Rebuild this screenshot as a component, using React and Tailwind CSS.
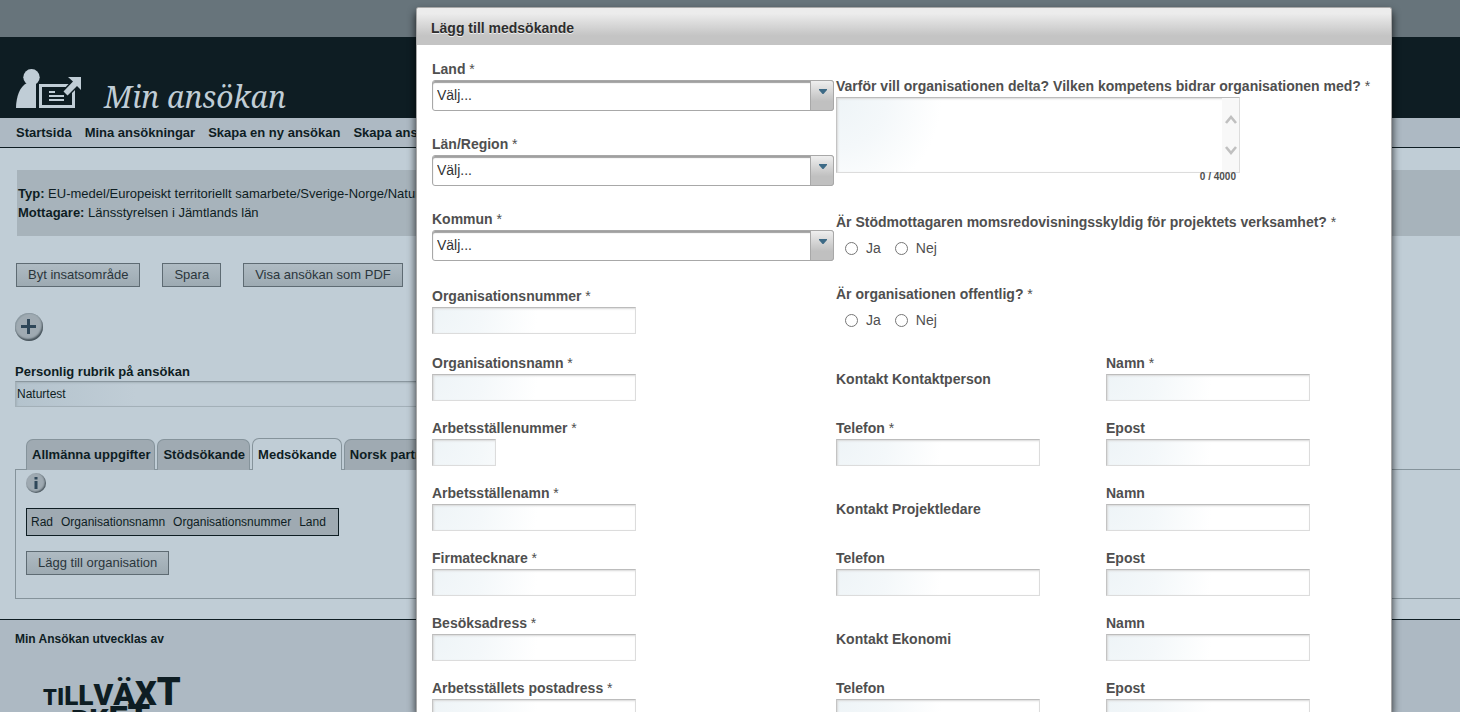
import { useState } from 'react';

const inputBg = 'bg-[radial-gradient(circle_at_0%_0%,#eef4f7_0%,#f4f8fa_50px,#ffffff_105px)]';
const inputBorder = 'border border-[#dcdcdc] border-t-[#bcbcbc] border-l-[#c4c4c4] shadow-[inset_1px_1px_2px_#d8d8d8]';

function Label({ htmlFor, required, children }) {
  return (
    <label htmlFor={htmlFor} className="block h-[17px] leading-[17px] whitespace-nowrap font-bold">
      {children}
      {required && <span className="font-normal"> *</span>}
    </label>
  );
}

function TextField({ id, label, required, small }) {
  return (
    <div className="h-[65px]">
      <Label htmlFor={id} required={required}>{label}</Label>
      <input
        id={id}
        type="text"
        className={`block mt-[2px] h-[27px] px-1 ${small ? 'w-[64px]' : 'w-[204px]'} ${inputBg} ${inputBorder}`}
      />
    </div>
  );
}

function SelectField({ id, label }) {
  return (
    <div className="h-[75px]">
      <Label htmlFor={id} required>{label}</Label>
      <div className="relative mt-[2px]">
        <select
          id={id}
          className="block w-full h-[31px] appearance-none rounded-[3px] border border-[#a8a8a8] bg-white pl-1 text-[#333] shadow-[inset_0_2px_1px_#a0a0a0]"
        >
          <option>Välj...</option>
        </select>
        <span className="pointer-events-none absolute right-0 top-0 h-[31px] w-[24px] rounded-r-[3px] border border-[#a8a8a8] bg-linear-to-b from-[#efefef] to-[#c0c0c0] to-70%">
          <svg viewBox="0 0 8 5" className="absolute left-[8px] top-[8px] h-[5px] w-[8px]">
            <path d="M0 0h8v1L4.500 5h-1L0 1z" fill="#3d6a86" />
          </svg>
        </span>
      </div>
    </div>
  );
}

function RadioField({ name, label }) {
  const [value, setValue] = useState('');
  return (
    <fieldset className="h-[72px]">
      <legend className="h-[17px] leading-[17px] whitespace-nowrap font-bold">
        {label}<span className="font-normal"> *</span>
      </legend>
      <div className="flex items-center gap-[14px] pl-[9px] pt-[8px]">
        {['Ja', 'Nej'].map((option) => (
          <label key={option} className="flex items-center gap-[8px] leading-[18px]">
            <input
              type="radio"
              name={name}
              checked={value === option}
              onChange={() => setValue(option)}
              className="size-[13px]"
            />
            {option}
          </label>
        ))}
      </div>
    </fieldset>
  );
}

function Heading({ children }) {
  return <h3 className="h-[65px] pt-[16px] leading-[17px] font-bold">{children}</h3>;
}

function Dialog() {
  const [text, setText] = useState('');
  return (
    <div
      role="dialog"
      aria-labelledby="dialog-title"
      className="absolute top-[7px] bottom-0 left-[416px] right-[68px] overflow-hidden rounded-t-[3px] border border-b-0 border-[#a8a8a8] bg-white text-[14px] text-[#4f4f4f] shadow-[0_5px_8px_rgba(0,0,0,0.8)]"
    >
      <div className="h-[37px] bg-linear-to-b from-[#ececec] from-15% to-[#c4c4c4] to-75% px-[14px]">
        <h2 id="dialog-title" className="pt-[2px] font-bold leading-[37px] text-[#2d2d2d] [text-shadow:0_1px_0_rgba(255,255,255,0.7)]">
          Lägg till medsökande
        </h2>
      </div>
      <form className="grid grid-cols-[402px_270px_1fr] gap-x-[1px] pl-[15px]">
        <div className="pt-[16px]">
          <SelectField id="land" label="Land" />
          <SelectField id="lan" label="Län/Region" />
          <SelectField id="kommun" label="Kommun" />
          <div className="h-[69px] pt-[2px]">
            <TextField id="orgnr" label="Organisationsnummer" required />
          </div>
          <TextField id="orgnamn" label="Organisationsnamn" required />
          <TextField id="arbnr" label="Arbetsställenummer" required small />
          <TextField id="arbnamn" label="Arbetsställenamn" required />
          <TextField id="firma" label="Firmatecknare" required />
          <TextField id="besok" label="Besöksadress" required />
          <TextField id="post" label="Arbetsställets postadress" required />
        </div>
        <div className="col-span-2 grid grid-cols-[270px_1fr] content-start pl-[1px] pt-[33px]">
          <div className="col-span-2 h-[136px]">
            <Label htmlFor="motiv" required>
              Varför vill organisationen delta? Vilken kompetens bidrar organisationen med?
            </Label>
            <div className="relative mt-[2px] w-[404px]">
              <textarea
                id="motiv"
                value={text}
                onChange={(e) => setText(e.target.value)}
                className={`block h-[76px] w-full resize-none p-1 pr-5 ${inputBg} ${inputBorder}`}
              />
              <div className="pointer-events-none absolute right-px top-px flex h-[74px] w-[17px] flex-col items-center justify-center gap-[22px] bg-[#f8f8f8]">
                <svg viewBox="0 0 12 9" className="h-[9px] w-[12px]" fill="none" stroke="#c0c0c0" strokeWidth="2.6">
                  <path d="M1 8L6 2l5 6" />
                </svg>
                <svg viewBox="0 0 12 9" className="h-[9px] w-[12px]" fill="none" stroke="#c0c0c0" strokeWidth="2.6">
                  <path d="M1 1l5 6 5-6" />
                </svg>
              </div>
              <p className="pr-1 text-right text-[10px] font-bold leading-[8px]">{text.length} / 4000</p>
            </div>
          </div>
          <div className="col-span-2">
            <RadioField name="moms" label="Är Stödmottagaren momsredovisningsskyldig för projektets verksamhet?" />
          </div>
          <div className="col-span-2 h-[69px]">
            <RadioField name="offentlig" label="Är organisationen offentlig?" />
          </div>
          <Heading>Kontakt Kontaktperson</Heading>
          <TextField id="kp-namn" label="Namn" required />
          <TextField id="kp-tel" label="Telefon" required />
          <TextField id="kp-epost" label="Epost" />
          <Heading>Kontakt Projektledare</Heading>
          <TextField id="pl-namn" label="Namn" />
          <TextField id="pl-tel" label="Telefon" />
          <TextField id="pl-epost" label="Epost" />
          <Heading>Kontakt Ekonomi</Heading>
          <TextField id="ek-namn" label="Namn" />
          <TextField id="ek-tel" label="Telefon" />
          <TextField id="ek-epost" label="Epost" />
        </div>
      </form>
    </div>
  );
}

function Button({ children }) {
  return (
    <button
      type="button"
      className="h-[24px] whitespace-nowrap border border-[#5e6b73] bg-linear-to-b from-[#afbbc3] to-[#9daab2] px-[11px] text-[13px] leading-[22px] text-[#2b363c]"
    >
      {children}
    </button>
  );
}

function LogoIcon() {
  return (
    <svg viewBox="0 0 66 40" className="h-[40px] w-[66px]" fill="#c0cdd6">
      <circle cx="15.5" cy="8.2" r="8.200" />
      <path d="M0 39C0 28 4 17 11 14h9v25z" />
      <path fillRule="evenodd" d="M23 15h36v24H23zM26 18v18h30V18z" />
      <path d="M33 22h6v2h-6zM33 26h15v2h-15zM33 30h15v2h-15z" />
      <path
        d="M52 8h13v13l-4-4-9.500 9.500-4-4L57 12.500z"
        stroke="#0e1d23"
        strokeWidth="3"
        paintOrder="stroke"
      />
    </svg>
  );
}

const tabs = ['Allmänna uppgifter', 'Stödsökande', 'Medsökande', 'Norsk partner'];

function Tabs() {
  const [active, setActive] = useState('Medsökande');
  return (
    <div role="tablist" className="flex h-[32px] items-end gap-[2px] pl-[11px]">
      {tabs.map((tab) => (
        <button
          key={tab}
          type="button"
          role="tab"
          aria-selected={tab === active}
          onClick={() => setActive(tab)}
          className={`whitespace-nowrap rounded-t-[7px] border border-b-0 border-[#85939b] pl-[5px] pr-[4px] text-[13px] font-bold ${
            tab === active ? 'relative z-10 h-[32px] bg-[#c0cdd6]' : 'h-[31px] bg-[#9faab2] pb-px'
          }`}
        >
          {tab}
        </button>
      ))}
    </div>
  );
}

function AgencyLogo() {
  return (
    <div className="pl-[28px] pt-[26px] font-['Roboto','Liberation_Sans',sans-serif] font-black">
      <div className="flex h-[36px] items-baseline leading-[36px]">
        <span className="text-[22px]">T</span>
        <span className="text-[24px]">I</span>
        <span className="text-[26px]">L</span>
        <span className="text-[28px]">L</span>
        <span className="text-[30px]">V</span>
        <span className="text-[32px]">Ä</span>
        <span className="text-[34px]">X</span>
        <span className="text-[38px]">T</span>
      </div>
      <div className="-mt-[10px] flex h-[36px] items-baseline leading-[36px]">
        <span className="text-[22px]">V</span>
        <span className="text-[24px]">E</span>
        <span className="text-[28px]">R</span>
        <span className="text-[30px]">K</span>
        <span className="text-[34px]">E</span>
        <span className="text-[36px]">T</span>
      </div>
    </div>
  );
}

const menu = ['Startsida', 'Mina ansökningar', 'Skapa en ny ansökan', 'Skapa ansökan'];

export default function App() {
  return (
    <div className="relative h-screen overflow-hidden bg-[#c0cdd6] font-['Liberation_Sans',Arial,sans-serif] text-[12px] text-[#0e1d23]">
      <div className="h-[37px] bg-[#67747b]" />
      <header className="flex h-[81px] items-end gap-[22px] bg-[#0e1d23] pl-[16px]">
        <div className="pb-[9px]"><LogoIcon /></div>
        <h1 className="pb-px font-['Noto_Serif','Liberation_Serif',serif] text-[30px] italic leading-[40px] text-[#c0cdd6]">
          Min ansökan
        </h1>
      </header>
      <nav className="flex h-[30px] gap-[13px] border-b border-[#0e1d23] bg-[#adb9c3] pl-[16px] text-[13px] font-bold leading-[30px]">
        {menu.map((item) => (
          <a key={item} href="#" className="whitespace-nowrap">{item}</a>
        ))}
      </nav>
      <main>
        <section className="ml-[17px] mt-[22px] h-[66px] bg-[#a7b3bb] pl-px pt-[14px] text-[13px] leading-[19px]">
          <p><b>Typ:</b> EU-medel/Europeiskt territoriellt samarbete/Sverige-Norge/Natur- och kulturarv</p>
          <p><b>Mottagare:</b> Länsstyrelsen i Jämtlands län</p>
        </section>
        <div className="flex gap-[22px] pl-[16px] pt-[27px]">
          <Button>Byt insatsområde</Button>
          <Button>Spara</Button>
          <Button>Visa ansökan som PDF</Button>
        </div>
        <button type="button" aria-label="Lägg till" className="ml-[15px] mt-[26px] block size-[28px] rounded-full bg-[#9faab2] shadow-[inset_-1px_-2px_2px_#45525a,inset_1px_1px_1px_#8c9aa2]">
          <svg viewBox="0 0 28 28" className="size-[28px]" stroke="#2f4759" strokeWidth="3">
            <path d="M6 13.500h15M13.500 6v15" />
          </svg>
        </button>
        <div className="pl-[15px] pt-[22px]">
          <label htmlFor="rubrik" className="block text-[13px] font-bold leading-[17px]">Personlig rubrik på ansökan</label>
          <input
            id="rubrik"
            type="text"
            defaultValue="Naturtest"
            className="block mt-px h-[26px] w-4/5 border border-[#a3b0b8] border-t-[#8a979f] bg-linear-to-r from-[#b4c3cd] to-[#c0cdd6] to-[120px] px-px text-[12px] shadow-[inset_1px_1px_2px_#a5b2ba]"
          />
        </div>
        <div className="pl-[15px] pt-[31px]">
          <Tabs />
          <div className="-mt-px h-[130px] border border-r-0 border-[#85939b] pl-[10px] pt-[3px]">
            <button type="button" aria-label="Information" className="block size-[20px] rounded-full bg-[#9faab2] shadow-[inset_-1px_-1px_2px_#45525a]">
              <svg viewBox="0 0 20 20" className="size-[20px]" fill="#2f4759">
                <path d="M8.500 4h3v2.500h-3zM8.500 8h3v8h-3z" />
              </svg>
            </button>
            <table className="mt-[15px] h-[28px] border border-[#0e1d23] bg-[#9faab2]">
              <thead>
                <tr>
                  <th className="px-1 font-normal">Rad</th>
                  <th className="px-1 font-normal">Organisationsnamn</th>
                  <th className="px-1 font-normal">Organisationsnummer</th>
                  <th className="pl-1 pr-3 font-normal">Land</th>
                </tr>
              </thead>
            </table>
            <div className="pt-[15px]"><Button>Lägg till organisation</Button></div>
          </div>
        </div>
      </main>
      <footer className="mt-[20px] h-[140px] border-t border-[#0e1d23] bg-[#adb9c3] pl-[15px] pt-[10px]">
        <p className="font-bold leading-[18px]">Min Ansökan utvecklas av</p>
        <AgencyLogo />
      </footer>
      <Dialog />
    </div>
  );
}
